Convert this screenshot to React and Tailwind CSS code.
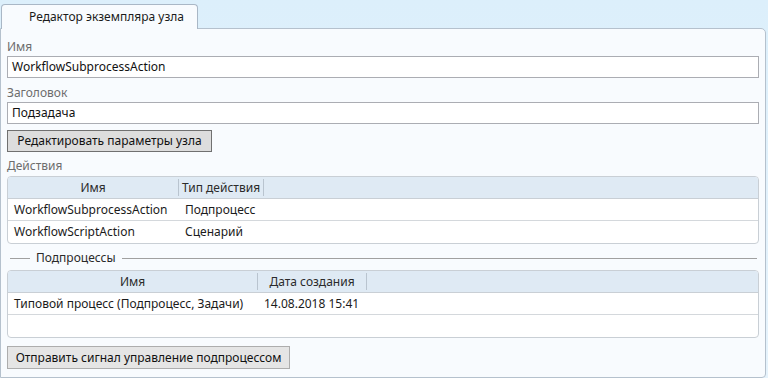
import React from 'react';

const font = { fontFamily: '"Noto Sans", "Open Sans", sans-serif' };

const actions = [
    { name: 'WorkflowSubprocessAction', type: 'Подпроцесс' },
    { name: 'WorkflowScriptAction', type: 'Сценарий' },
];

function HeaderCell({ width, children, last }) {
    return (
        <div className="flex h-full items-center" style={{ width }}>
            <div className="flex-1 text-center">{children}</div>
            <div className="h-[17px] w-px bg-[#b9c4cf]" />
        </div>
    );
}

function Grid({ columns, rows, emptyRows = 0 }) {
    return (
        <div className="overflow-hidden rounded-[4px] border border-[#c9cfd5] bg-white">
            <div className="flex h-[22px] items-center border-b border-[#c9cfd5] bg-[#dfeaf4] text-[#2b2b2b]">
                {columns.map((c) => (
                    <HeaderCell key={c.label} width={c.width}>
                        {c.label}
                    </HeaderCell>
                ))}
            </div>
            {rows.map((r, i) => (
                <div
                    key={i}
                    className="flex h-[22px] items-center border-b border-[#d4d8dc] text-[#1b1b1b] last:border-b-0"
                >
                    {r.map((cell, j) => (
                        <div key={j} className="px-[6px] whitespace-nowrap" style={{ width: columns[j].width }}>
                            {cell}
                        </div>
                    ))}
                </div>
            ))}
            {Array.from({ length: emptyRows }).map((_, i) => (
                <div key={'e' + i} className="h-[22px]" />
            ))}
        </div>
    );
}

export default function App() {
    return (
        <div
            className="flex h-[378px] w-[768px] flex-col bg-gradient-to-b from-[#dcEFFB] to-[#e6f3fc] text-[12px] leading-[16px]"
            style={font}
        >
            <div className="flex pt-[4px]">
                <div className="relative z-10 -mb-px ml-px flex h-[25px] w-[197px] items-center rounded-t-[4px] border border-b-0 border-[#a9b7c6] bg-[#f8fbfe] pl-[27px] text-[#1b1b1b]">
                    Редактор экземпляра узла
                </div>
            </div>
            <div className="flex flex-1 flex-col rounded-tr-[5px] rounded-br-[4px] border border-[#b5c1cd] bg-[#f8fbfe] px-[6px] pt-[10px] mr-[2px]">
                <div className="h-[16px] text-[#6d6d6d]">Имя</div>
                <div className="mt-px flex h-[22px] items-center border border-[#abadb3] bg-white px-[4px] text-[#111]">
                    WorkflowSubprocessAction
                </div>
                <div className="mt-[7px] h-[16px] text-[#6d6d6d]">Заголовок</div>
                <div className="mt-px flex h-[22px] items-center border border-[#abadb3] bg-white px-[4px] text-[#111]">
                    Подзадача
                </div>
                <div className="mt-[6px] flex h-[22px] w-[205px] items-center justify-center border border-[#707070] bg-[#dddddd] text-[#111]">
                    Редактировать параметры узла
                </div>
                <div className="mt-[6px] h-[16px] text-[#6d6d6d]">Действия</div>
                <div className="mt-[2px]">
                    <Grid
                        columns={[
                            { label: 'Имя', width: 171 },
                            { label: 'Тип действия', width: 85 },
                        ]}
                        rows={actions.map((a) => [a.name, a.type])}
                    />
                </div>
                <div className="mt-[6px] flex h-[16px] items-center">
                    <div className="ml-[3px] h-px w-[20px] bg-[#a0a0a0]" />
                    <div className="px-[6px] text-[#2a2a2a]">Подпроцессы</div>
                    <div className="mr-[2px] h-px flex-1 bg-[#a0a0a0]" />
                </div>
                <div className="mt-[4px]">
                    <Grid
                        columns={[
                            { label: 'Имя', width: 250 },
                            { label: 'Дата создания', width: 109 },
                        ]}
                        rows={[['Типовой процесс (Подпроцесс, Задачи)', '14.08.2018 15:41']]}
                        emptyRows={1}
                    />
                </div>
                <div className="mt-[8px] flex h-[23px] w-[283px] items-center justify-center border border-[#adadad] bg-[#e5e5e5] text-[#111]">
                    Отправить сигнал управление подпроцессом
                </div>
            </div>
        </div>
    );
}
